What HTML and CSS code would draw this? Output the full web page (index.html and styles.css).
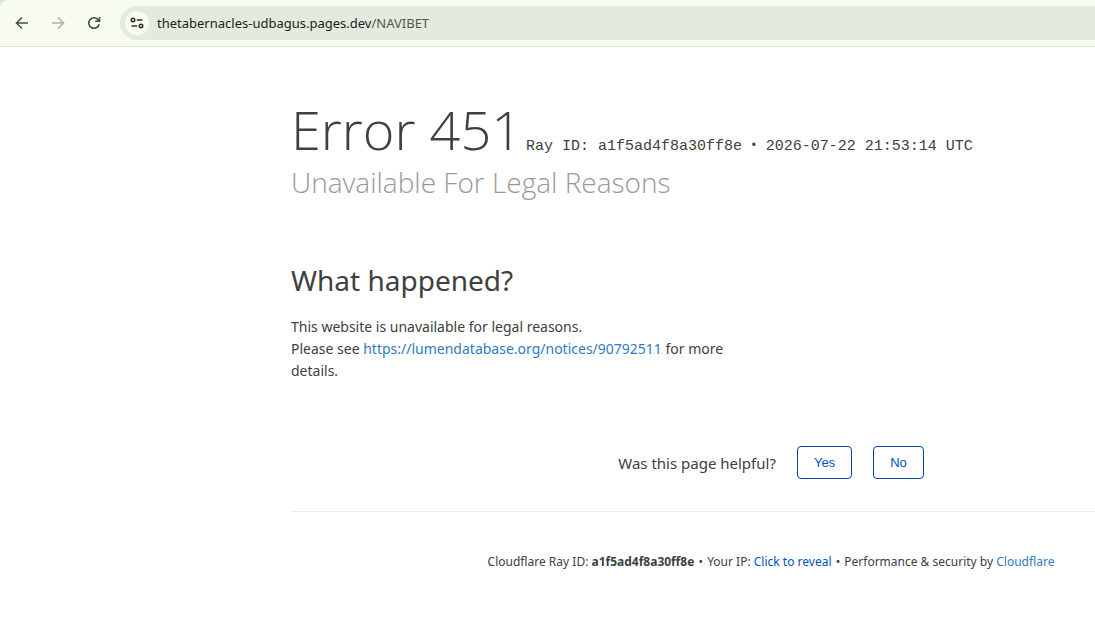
FILE: index.html
```html
<!DOCTYPE html>
<html lang="en-US">
<head>
<title>Unavailable For Legal Reasons</title>
<meta charset="UTF-8">
<meta name="robots" content="noindex, nofollow">
<meta name="viewport" content="width=device-width,initial-scale=1">
<link rel="stylesheet" href="styles.css">
</head>
<body>
<div class="toolbar-back">
	<div class="toolbar">
		<button type="button" class="nav-button" aria-label="Back">
			<svg width="16" height="16" viewBox="0 0 16 16"><path d="M14 8H3M8 2.500L2.500 8L8 13.500"/></svg>
		</button>
		<button type="button" class="nav-button" aria-label="Forward" disabled>
			<svg width="16" height="16" viewBox="0 0 16 16"><path d="M2 8H13M8 2.500L13.500 8L8 13.500"/></svg>
		</button>
		<button type="button" class="nav-button" aria-label="Reload">
			<svg width="16" height="16" viewBox="0 0 16 16"><path d="M13.200 9.200A5.300 5.300 0 1 1 12.200 4.700L13.300 6M13.500 2V6.300H9.200"/></svg>
		</button>
		<div class="omnibox">
			<button type="button" class="site-info" aria-label="View site information">
				<svg width="16" height="16" viewBox="0 0 16 16"><circle cx="4" cy="5" r="1.700"/><path d="M7.800 5H13.500M2.500 11H8.200"/><circle cx="12" cy="11" r="1.700"/></svg>
			</button>
			<div class="url">thetabernacles-udbagus.pages.dev<span>/NAVIBET</span></div>
		</div>
	</div>
</div>

<div class="viewport">
	<div class="page">
		<div class="wrapper">
			<header class="header">
				<h1>
					<span>Error 451</span>
					<small class="heading-ray-id">Ray ID: a1f5ad4f8a30ff8e <b>&bull;</b> 2026-07-22 21:53:14 UTC</small>
				</h1>
				<h2 class="subheadline">Unavailable For Legal Reasons</h2>
			</header>

			<section class="column">
				<h2>What happened?</h2>
				<p>This website is unavailable for legal reasons.</p>
				<p>Please see <a href="https://lumendatabase.org/notices/90792511">https://lumendatabase.org/notices/90792511</a> for more details.</p>
			</section>

			<div class="feedback">
				<span>Was this page helpful?</span>
				<button type="button">Yes</button>
				<button type="button">No</button>
			</div>

			<footer class="footer">
				<p>
					<span>Cloudflare Ray ID: <strong>a1f5ad4f8a30ff8e</strong></span>
					<span class="separator">&bull;</span>
					<span>Your IP: <button type="button" class="reveal">Click to reveal</button></span>
					<span class="separator">&bull;</span>
					<span>Performance &amp; security by <a href="#">Cloudflare</a></span>
				</p>
			</footer>
		</div>
	</div>
</div>
</body>
</html>
```
FILE: styles.css
```css
* {
	box-sizing: border-box;
	margin: 0;
	padding: 0;
}

body {
	background: #fff;
	color: #404040;
	font-family: "Noto Sans", "Open Sans", sans-serif;
	font-size: 14px;
	line-height: 22px;
}

a {
	color: #2f7bbf;
	text-decoration: none;
}

button {
	border: 0;
	background: none;
	font: inherit;
	cursor: pointer;
}

/* browser toolbar */
.toolbar-back {
	background: #d3e8d3;
}

.toolbar {
	display: flex;
	align-items: center;
	gap: 8px;
	padding: 6px 0 6px 8px;
	border-bottom: 1px solid #dde3da;
	border-top-left-radius: 8px;
	background: #f8fbf2;
}

.nav-button {
	display: flex;
	padding: 6px;
	color: #43523f;
}

.nav-button:disabled {
	color: #adb3a9;
}

.toolbar svg {
	fill: none;
	stroke: currentColor;
	stroke-width: 1.6;
}

.omnibox {
	display: flex;
	flex: 1;
	align-items: center;
	gap: 8px;
	height: 34px;
	margin-left: 4px;
	padding-left: 5px;
	border-radius: 17px 0 0 17px;
	background: #e3ebdf;
}

.site-info {
	display: flex;
	padding: 4px;
	border-radius: 50%;
	background: #f8fbf2;
	color: #2b352a;
}

.url {
	color: #1d211c;
	font-size: 13px;
}

.url span {
	color: #50584e;
}

/* the page is centered in a full desktop window */
.viewport {
	overflow: hidden;
}

.page {
	min-width: 1542px;
}

.wrapper {
	width: 960px;
	margin: 0 auto;
}

.header {
	padding-top: 52px;
}

h1 {
	display: flex;
	align-items: baseline;
	gap: 4px;
	font-family: "Open Sans", sans-serif;
	font-size: 54px;
	font-weight: 300;
	line-height: 60px;
}

.heading-ray-id {
	font-family: "Liberation Mono", monospace;
	font-size: 15px;
	font-weight: 400;
	line-height: 22px;
}

.heading-ray-id b {
	font-family: "Open Sans", sans-serif;
	font-weight: 400;
}

h2 {
	font-size: 28px;
	font-weight: 400;
	line-height: 38px;
}

.subheadline {
	margin-top: 4px;
	color: #999;
	font-family: "Open Sans", sans-serif;
	font-weight: 300;
}

.column {
	width: 450px;
	margin-top: 60px;
}

.column h2 {
	margin-bottom: 17px;
}

.feedback {
	display: flex;
	align-items: center;
	justify-content: center;
	gap: 21px;
	padding: 64px 0 32px;
	border-bottom: 1px solid #ebebeb;
	font-size: 15px;
}

.feedback button {
	padding: 5px 16px;
	border: 1px solid #0045a6;
	border-radius: 4px;
	color: #0051c3;
	font-family: "Liberation Sans", Arial, sans-serif;
	font-size: 13px;
	line-height: 21px;
}

.footer {
	padding: 39px 0;
	font-size: 12px;
	text-align: center;
}

.footer .separator {
	margin: 0 1px;
}

.footer .reveal {
	color: #0051c3;
}
```
